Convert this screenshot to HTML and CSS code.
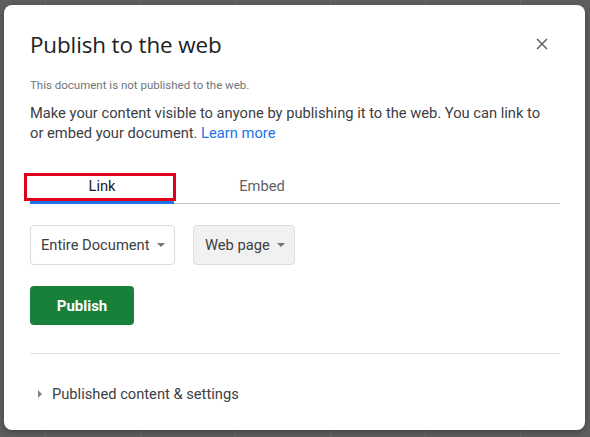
FILE: index.html
```html
<!DOCTYPE html>
<html>
<head>
<meta charset="utf-8">
<link rel="stylesheet" href="styles.css">
</head>
<body>
<div class="backdrop">
  <div class="dialog">
    <div class="header">
      <h1 class="title">Publish to the web</h1>
      <button class="close" aria-label="Close">
        <svg width="12" height="12" viewBox="0 0 12 12"><path d="M1 1L11 11M11 1L1 11" stroke="#5f6368" stroke-width="1.5" fill="none"/></svg>
      </button>
    </div>
    <p class="status">This document is not published to the web.</p>
    <p class="desc">Make your content visible to anyone by publishing it to the web. You can link to or embed your document. <a class="link" href="#">Learn more</a></p>
    <div class="tabs">
      <div class="tab tab-link active">Link<span class="highlight"></span></div>
      <div class="tab tab-embed">Embed</div>
    </div>
    <div class="selects">
      <div class="select select-doc">Entire Document<span class="caret"></span></div>
      <div class="select select-type">Web page<span class="caret"></span></div>
    </div>
    <button class="publish">Publish</button>
    <div class="sep"></div>
    <div class="expander"><span class="tri"></span>Published content &amp; settings</div>
  </div>
</div>
</body>
</html>
```
FILE: styles.css
```css
* { box-sizing: border-box; }
html, body { margin: 0; padding: 0; }
body {
  width: 590px;
  height: 437px;
  overflow: hidden;
  font-family: Roboto, "Liberation Sans", Arial, sans-serif;
}
.backdrop {
  width: 590px;
  height: 437px;
  padding: 5px 5px 7px 4px;
  background-color: #5e5e5e;
  background-image:
    linear-gradient(to right, rgba(255,255,255,0.07) 1px, transparent 1px);
  background-size: 95px 100%;
  background-position: 45px 0;
}
.dialog {
  width: 581px;
  height: 425px;
  background: #fff;
  border-radius: 8px;
  padding: 24px 25px 0 26px;
  box-shadow: 0 2px 6px rgba(0,0,0,0.3);
}
.header {
  display: flex;
  align-items: center;
  justify-content: space-between;
  height: 32px;
}
.title {
  margin: 0;
  font-family: "Open Sans", Roboto, sans-serif;
  font-weight: 400;
  font-size: 22.4px;
  line-height: 32px;
  color: #202124;
  letter-spacing: -0.1px;
}
.close {
  border: 0;
  background: none;
  padding: 0;
  width: 12px;
  height: 12px;
  margin-right: 12px;
  margin-top: -2px;
  display: flex;
}
.status {
  margin: 16px 0 0;
  font-size: 11.5px;
  line-height: 16px;
  color: #70757a;
}
.desc {
  margin: 10px 0 0;
  max-width: 522px;
  font-size: 14.7px;
  line-height: 20px;
  color: #3c4043;
}
.link { color: #1a73e8; text-decoration: none; }
.tabs {
  margin-top: 27px;
  display: flex;
  border-bottom: 1px solid #c4c4c4;
  height: 34px;
}
.tab {
  position: relative;
  font-size: 14.7px;
  line-height: 33px;
  text-align: center;
  color: #5f6368;
}
.tab-link {
  width: 144px;
  color: #202124;
  border-bottom: 3px solid #1a73e8;
  margin-bottom: -1px;
  line-height: 32px;
}
.tab-embed { width: 176px; }
.highlight {
  position: absolute;
  left: -6px;
  top: 3px;
  width: 152px;
  height: 28px;
  border: 3px solid #e0001b;
}
.selects {
  margin-top: 21px;
  display: flex;
  gap: 18px;
}
.select {
  height: 40px;
  display: flex;
  align-items: center;
  border: 1px solid #dadce0;
  border-radius: 4px;
  font-size: 14.7px;
  color: #3c4043;
}
.select-doc { width: 145px; padding-left: 10px; }
.select-type { width: 102px; padding-left: 11px; background: #f1f1f1; }
.caret {
  margin-left: 7px;
  width: 0; height: 0;
  border-left: 4px solid transparent;
  border-right: 4px solid transparent;
  border-top: 4px solid #70757a;
}
.publish {
  margin-top: 21px;
  display: block;
  width: 104px;
  height: 39px;
  border: 0;
  border-radius: 4px;
  background: #188038;
  color: #fff;
  font-family: Roboto, "Liberation Sans", Arial, sans-serif;
  font-weight: 700;
  font-size: 15px;
}
.sep {
  margin-top: 28px;
  height: 1px;
  background: #e0e0e0;
}
.expander {
  margin-top: 29px;
  display: flex;
  align-items: center;
  font-size: 14.7px;
  line-height: 22px;
  color: #3c4043;
}
.tri {
  margin-left: 8px;
  margin-right: 10px;
  width: 0; height: 0;
  border-top: 4px solid transparent;
  border-bottom: 4px solid transparent;
  border-left: 4px solid #80868b;
}
```
